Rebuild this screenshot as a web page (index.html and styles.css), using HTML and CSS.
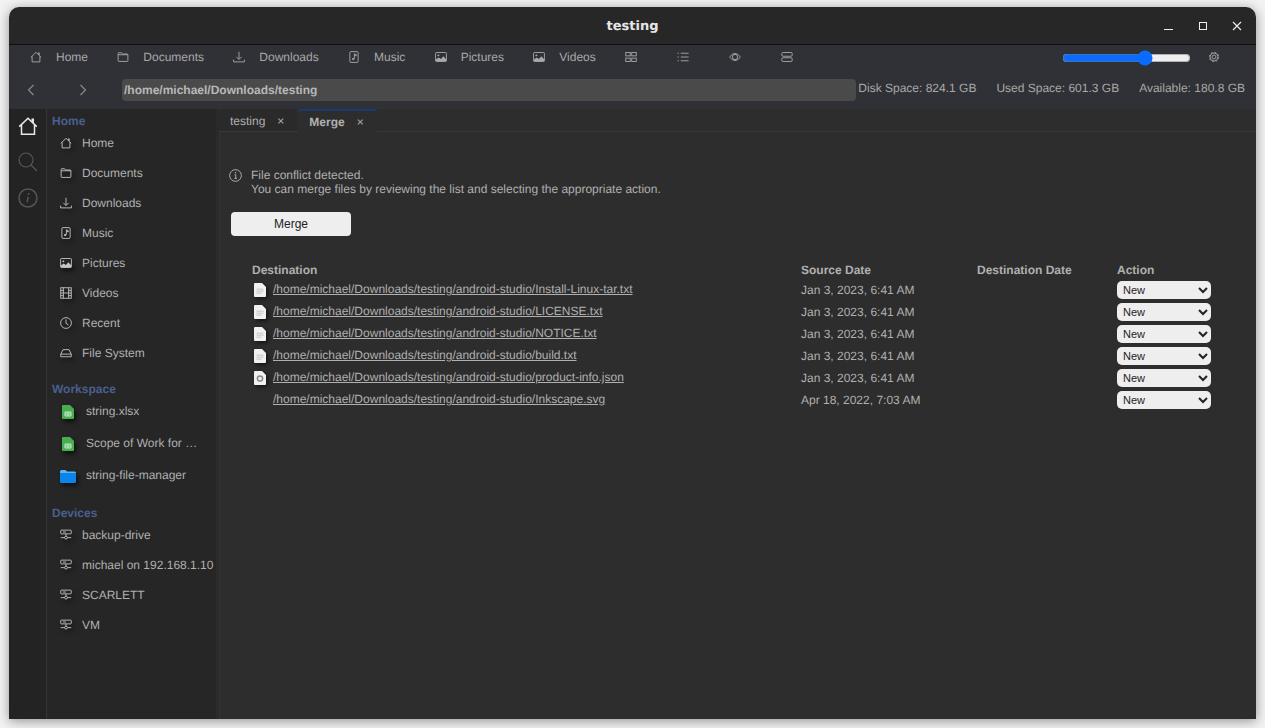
FILE: index.html
```html
<!DOCTYPE html>
<html>
	<head>
		<meta charset="utf-8">
		<title>testing</title>
		<link rel="stylesheet" href="styles.css">
	</head>
	<body>
		<svg class="defs" width="0" height="0">
			<symbol id="i-home" viewBox="0 0 16 16"><path d="M1 8.500 8 1.800l7 6.700M2.800 7v7.500h10.400V7"/><path class="solid" d="M10.800 2h2v4l-2-2z"/></symbol>
			<symbol id="i-folder" viewBox="0 0 16 16"><path d="M1.500 4.500V3.200q0-.9.9-.9h3.200q.6 0 1 .5l.9 1.200h6.100q.9 0 .9.900v8q0 1-1 1H2.500q-1 0-1-1z"/><path d="M1.500 5h13"/></symbol>
			<symbol id="i-down" viewBox="0 0 16 16"><path d="M8 1v10M4.500 7.800 8 11.300l3.500-3.500M.8 11.500v3h14.400v-3"/></symbol>
			<symbol id="i-music" viewBox="0 0 16 16"><rect x="2.500" y=".8" width="11" height="14.400" rx="1.500"/><path d="M8.500 3.500v7M8.500 3.800l2.500 1v1.800l-2.500-1"/><circle cx="6.800" cy="10.800" r="1.500" class="solid"/></symbol>
			<symbol id="i-image" viewBox="0 0 16 16"><rect x=".8" y="2" width="14.400" height="12" rx="1"/><path class="solid" d="M1 13.800v-2.500l4-2.800 3 2 3-3.500 4 4v2.800z"/><circle cx="4.500" cy="5.800" r="1.300" class="solid"/></symbol>
			<symbol id="i-film" viewBox="0 0 16 16"><rect x="1" y="1" width="14" height="14"/><path d="M4.500 1v14M11.500 1v14M4.500 8h7M1 4.500h3.500M1 8h3.500M1 11.500h3.500M11.500 4.500H15M11.500 8H15M11.500 11.500H15"/></symbol>
			<symbol id="i-clock" viewBox="0 0 16 16"><circle cx="8" cy="8" r="7.200"/><path d="M8 3.200V8.500l3.300 2"/></symbol>
			<symbol id="i-drive" viewBox="0 0 16 16"><path d="M1 9.500 4 3.500h8l3 6M1 9.500h14v3.500H1z"/></symbol>
			<symbol id="i-net" viewBox="0 0 16 16"><rect x="1" y="1.500" width="14" height="5" rx=".8"/><path d="M8 6.500v3M1 11.500h5M10 11.500h5M4 4h4"/><circle cx="8" cy="11.500" r="1.900"/></symbol>
			<symbol id="i-grid" viewBox="0 0 16 16"><rect x="1" y="2" width="6" height="4.500"/><rect x="9" y="2" width="6" height="4.500"/><rect x="1" y="9.500" width="6" height="4.500"/><rect x="9" y="9.500" width="6" height="4.500"/></symbol>
			<symbol id="i-list" viewBox="0 0 16 16"><path d="M5 3h10.500M5 8h10.500M5 13h10.500M.8 3h1.700M.8 8h1.700M.8 13h1.700"/></symbol>
			<symbol id="i-eye" viewBox="0 0 16 16"><path d="M.8 8Q4 3.200 8 3.200T15.200 8Q12 12.800 8 12.800T.8 8z"/><circle cx="8" cy="8" r="3.500"/></symbol>
			<symbol id="i-stack" viewBox="0 0 16 16"><rect x="1" y="2" width="14" height="5" rx="1.800"/><rect x="1" y="9" width="14" height="5" rx="1.800"/></symbol>
			<symbol id="i-gear" viewBox="0 0 16 16"><circle cx="8" cy="8" r="2.600"/><circle cx="8" cy="8" r="5.300"/><circle cx="8" cy="8" r="6.300" stroke-width="2" stroke-dasharray="2.200 2.750"/></symbol>
			<symbol id="i-back" viewBox="0 0 12 12"><path d="M8.500 1 3.500 6l5 5"/></symbol>
			<symbol id="i-next" viewBox="0 0 12 12"><path d="M3.500 1l5 5-5 5"/></symbol>
			<symbol id="i-search" viewBox="0 0 20 20"><circle cx="8" cy="8" r="7"/><path d="M13 13l6 6" stroke-width="1.800"/></symbol>
			<symbol id="i-info" viewBox="0 0 16 16"><circle cx="8" cy="8" r="7.200"/><circle cx="8.500" cy="4.800" r=".8" class="solid"/><path d="M8.200 7 7.300 11.500"/></symbol>
			<symbol id="i-notice" viewBox="0 0 16 16"><circle cx="8" cy="8" r="7.200"/><circle cx="8" cy="4.600" r=".9" class="solid"/><path d="M6.800 7h1.500v4.600M6.600 11.600h3.200"/></symbol>
			<symbol id="i-doc" viewBox="0 0 12 14"><path class="page" d="M1 0h7l4 4v9a1 1 0 0 1-1 1H1a1 1 0 0 1-1-1V1a1 1 0 0 1 1-1z"/><path class="lines" d="M2.500 6.200h7M2.500 8.200h7M2.500 10.200h5"/></symbol>
			<symbol id="i-json" viewBox="0 0 12 14"><path class="page" d="M1 0h7l4 4v9a1 1 0 0 1-1 1H1a1 1 0 0 1-1-1V1a1 1 0 0 1 1-1z"/><circle class="ring" cx="6" cy="7.500" r="2.600"/></symbol>
			<symbol id="i-sheet" viewBox="0 0 12 14"><path class="sheet" d="M1 0h7l4 4v9a1 1 0 0 1-1 1H1a1 1 0 0 1-1-1V1a1 1 0 0 1 1-1z"/><path class="sheet-cells" d="M3 7h6v4H3zM3 9h6M6 7v4"/></symbol>
			<symbol id="i-blue" viewBox="0 0 16 13"><path class="blue-back" d="M0 1.500Q0 0 1.500 0h4l1.500 1.500h7.500Q16 1.500 16 3v2H0z"/><path class="blue-front" d="M0 3h16v8.500q0 1.500-1.500 1.500h-13Q0 13 0 11.500z"/></symbol>
		</svg>

		<div class="window">
			<header class="titlebar">
				<h1>testing</h1>
				<div class="controls">
					<i class="ctl-min"></i>
					<i class="ctl-max"></i>
					<svg class="ctl-close" viewBox="0 0 10 10"><path d="M1 1l8 8M9 1l-8 8"/></svg>
				</div>
			</header>

			<div class="toolbar">
				<div class="tool-row">
					<a class="tool"><svg class="ico"><use href="#i-home"/></svg>Home</a>
					<a class="tool"><svg class="ico"><use href="#i-folder"/></svg>Documents</a>
					<a class="tool"><svg class="ico"><use href="#i-down"/></svg>Downloads</a>
					<a class="tool"><svg class="ico"><use href="#i-music"/></svg>Music</a>
					<a class="tool"><svg class="ico"><use href="#i-image"/></svg>Pictures</a>
					<a class="tool"><svg class="ico"><use href="#i-image"/></svg>Videos</a>
					<a class="tool tool-icon"><svg class="ico"><use href="#i-grid"/></svg></a>
					<a class="tool tool-icon"><svg class="ico"><use href="#i-list"/></svg></a>
					<a class="tool tool-icon"><svg class="ico"><use href="#i-eye"/></svg></a>
					<a class="tool tool-icon"><svg class="ico"><use href="#i-stack"/></svg></a>
					<input class="zoom" type="range" min="0" max="100" value="66">
					<svg class="ico"><use href="#i-gear"/></svg>
				</div>
				<div class="path-row">
					<svg class="ico nav"><use href="#i-back"/></svg>
					<svg class="ico nav"><use href="#i-next"/></svg>
					<div class="address">/home/michael/Downloads/testing</div>
					<div class="stats">
						<span>Disk Space: 824.1 GB</span>
						<span>Used Space: 601.3 GB</span>
						<span>Available: 180.8 GB</span>
					</div>
				</div>
			</div>

			<div class="main">
				<nav class="rail">
					<svg class="rail-home"><use href="#i-home"/></svg>
					<svg class="rail-dim"><use href="#i-search"/></svg>
					<svg class="rail-dim"><use href="#i-info"/></svg>
				</nav>

				<aside class="sidebar">
					<h2>Home</h2>
					<ul>
						<li><svg class="ico"><use href="#i-home"/></svg>Home</li>
						<li><svg class="ico"><use href="#i-folder"/></svg>Documents</li>
						<li><svg class="ico"><use href="#i-down"/></svg>Downloads</li>
						<li><svg class="ico"><use href="#i-music"/></svg>Music</li>
						<li><svg class="ico"><use href="#i-image"/></svg>Pictures</li>
						<li><svg class="ico"><use href="#i-film"/></svg>Videos</li>
						<li><svg class="ico"><use href="#i-clock"/></svg>Recent</li>
						<li><svg class="ico"><use href="#i-drive"/></svg>File System</li>
					</ul>
					<h2 class="h-work">Workspace</h2>
					<ul class="work">
						<li><span class="work-ico"><svg class="sheet-ico"><use href="#i-sheet"/></svg></span><span>string.xlsx</span></li>
						<li><span class="work-ico"><svg class="sheet-ico"><use href="#i-sheet"/></svg></span><span>Scope of Work for …</span></li>
						<li><span class="work-ico"><svg class="blue-ico"><use href="#i-blue"/></svg></span><span>string-file-manager</span></li>
					</ul>
					<h2 class="h-dev">Devices</h2>
					<ul>
						<li><svg class="ico"><use href="#i-net"/></svg>backup-drive</li>
						<li><svg class="ico"><use href="#i-net"/></svg>michael on 192.168.1.10</li>
						<li><svg class="ico"><use href="#i-net"/></svg>SCARLETT</li>
						<li><svg class="ico"><use href="#i-net"/></svg>VM</li>
					</ul>
				</aside>

				<section class="pane">
					<div class="tabs">
						<div class="tab">testing<span class="tab-x">×</span></div>
						<div class="tab tab-on">Merge<span class="tab-x">×</span></div>
					</div>
					<div class="page">
						<div class="notice">
							<svg class="ico"><use href="#i-notice"/></svg>
							<p>File conflict detected.<br>You can merge files by reviewing the list and selecting the appropriate action.</p>
						</div>
						<button class="merge-btn">Merge</button>
						<table class="merge">
							<colgroup>
								<col class="c-dest"><col class="c-src"><col class="c-dst"><col class="c-act">
							</colgroup>
							<thead>
								<tr><th>Destination</th><th>Source Date</th><th>Destination Date</th><th>Action</th></tr>
							</thead>
							<tbody>
								<tr>
									<td><div class="file"><svg class="file-ico"><use href="#i-doc"/></svg><a>/home/michael/Downloads/testing/android-studio/Install-Linux-tar.txt</a></div></td>
									<td>Jan 3, 2023, 6:41 AM</td><td></td>
									<td><select><option>New</option></select></td>
								</tr>
								<tr>
									<td><div class="file"><svg class="file-ico"><use href="#i-doc"/></svg><a>/home/michael/Downloads/testing/android-studio/LICENSE.txt</a></div></td>
									<td>Jan 3, 2023, 6:41 AM</td><td></td>
									<td><select><option>New</option></select></td>
								</tr>
								<tr>
									<td><div class="file"><svg class="file-ico"><use href="#i-doc"/></svg><a>/home/michael/Downloads/testing/android-studio/NOTICE.txt</a></div></td>
									<td>Jan 3, 2023, 6:41 AM</td><td></td>
									<td><select><option>New</option></select></td>
								</tr>
								<tr>
									<td><div class="file"><svg class="file-ico"><use href="#i-doc"/></svg><a>/home/michael/Downloads/testing/android-studio/build.txt</a></div></td>
									<td>Jan 3, 2023, 6:41 AM</td><td></td>
									<td><select><option>New</option></select></td>
								</tr>
								<tr>
									<td><div class="file"><svg class="file-ico"><use href="#i-json"/></svg><a>/home/michael/Downloads/testing/android-studio/product-info.json</a></div></td>
									<td>Jan 3, 2023, 6:41 AM</td><td></td>
									<td><select><option>New</option></select></td>
								</tr>
								<tr>
									<td><div class="file"><span class="file-ico"></span><a>/home/michael/Downloads/testing/android-studio/Inkscape.svg</a></div></td>
									<td>Apr 18, 2022, 7:03 AM</td><td></td>
									<td><select><option>New</option></select></td>
								</tr>
							</tbody>
						</table>
					</div>
				</section>
			</div>
		</div>
	</body>
</html>
```

FILE: styles.css
```css
*{box-sizing:border-box;}
html,body,h1,h2,ul,p{margin:0;padding:0;}
ul{list-style:none;}
body{
	height:728px;
	padding:7px 9px 9px;
	overflow:hidden;
	background:#f2f2f2;
	font-family:"Liberation Sans",Arial,sans-serif;
	font-size:12px;
	color:#b0b0b0;
	text-rendering:geometricPrecision;
}
.defs{position:absolute;}
symbol *{fill:none;stroke:currentColor;stroke-width:1.200;}
symbol .solid{fill:currentColor;stroke:none;}
symbol .page{fill:#f0f0f0;stroke:none;}
symbol .lines{stroke:#c4c4c4;stroke-width:1;}
symbol .ring{stroke:#8a8a8a;stroke-width:1.500;}
symbol .sheet{fill:#46b04f;stroke:none;}
symbol .sheet-cells{stroke:#e8f5e9;stroke-width:.8;}
symbol .blue-back{fill:#5cb3f5;stroke:none;}
symbol .blue-front{fill:#0a84e8;stroke:none;}

.window{
	display:flex;
	flex-direction:column;
	height:100%;
	border-radius:10px 10px 0 0;
	overflow:hidden;
	box-shadow:0 2px 12px rgba(0,0,0,.4);
}

/* title bar */
.titlebar{
	flex:none;
	display:flex;
	align-items:center;
	justify-content:center;
	position:relative;
	height:38px;
	padding-top:1px;
	background:#272727;
	border-bottom:1px solid #0f0f0f;
}
.titlebar h1{
	font-family:"DejaVu Sans",sans-serif;
	font-size:13px;
	font-weight:bold;
	color:#e6e6e6;
}
.controls{
	position:absolute;
	right:14px;
	top:0;
	bottom:0;
	display:flex;
	align-items:center;
	gap:25px;
}
.controls i{display:block;}
.ctl-min{width:9px;height:1px;margin:8px 1px 0 0;background:#eee;}
.ctl-max{width:8px;height:8px;border:1px solid #eee;}
.ctl-close{width:10px;height:10px;stroke:#eee;stroke-width:1.100;fill:none;}

/* toolbar */
.toolbar{
	flex:none;
	height:64px;
	padding-top:3px;
	background:#303136;
	color:#a8a8a8;
}
.ico{flex:none;width:12px;height:12px;}
.tool-row{
	display:flex;
	align-items:center;
	height:18px;
	padding:0 36px 0 21px;
	gap:29.300px;
}
.tool{display:flex;align-items:center;gap:14px;}
.tool-icon{margin-right:10.700px;}
.zoom{
	width:129px;
	height:16px;
	margin:1px -12.300px 0 auto;
	accent-color:#0a6cff;
}
.path-row{
	display:flex;
	align-items:flex-start;
	margin-top:13px;
	padding:0 11px 0 16px;
}
.nav{margin:5px 40px 0 0;color:#8a8a8a;}
.nav + .nav{margin-right:33px;}
.address{
	flex:1;
	height:22px;
	padding-left:2px;
	line-height:22px;
	font-weight:bold;
	background:#4a4a4a;
	border-radius:4px;
	color:#b8b8b8;
}
.stats{
	display:flex;
	gap:20px;
	margin-left:2px;
	line-height:18px;
}

/* body of the window */
.main{
	flex:1;
	display:flex;
	min-height:0;
	background:#2d2d2d;
}
.rail{
	flex:none;
	display:flex;
	flex-direction:column;
	align-items:center;
	gap:16px;
	width:38px;
	padding:7px 0 0;
	background:#232323;
	border-right:1px solid #363636;
}
.rail svg{width:20px;height:20px;flex:none;}
.rail-home{color:#e8e8e8;}
.rail-dim{color:#555;}

.sidebar{
	flex:none;
	width:172px;
	padding:5px 0 0 5px;
	background:#262626;
	border-right:3px solid #2a2a2a;
	overflow:hidden;
}
.sidebar h2{
	font-size:12px;
	line-height:14px;
	font-weight:bold;
	color:#4a5f8f;
}
.sidebar .h-work{margin:14px 0 -1px;}
.sidebar .h-dev{margin-top:15px;}
.sidebar li{
	display:flex;
	align-items:center;
	gap:10px;
	height:30px;
	padding-left:8px;
	white-space:nowrap;
}
.sidebar li .ico{color:#c4c4c4;filter:drop-shadow(2px 3px 2px rgba(0,0,0,.6));}
.work li{height:32px;}
.work-ico{
	display:flex;
	align-items:center;
	justify-content:center;
	flex:none;
	width:16px;
	margin-top:2px;
}
.sheet-ico{width:12px;height:14px;filter:drop-shadow(2px 3px 2px rgba(0,0,0,.6));}
.blue-ico{width:16px;height:13px;filter:drop-shadow(2px 3px 2px rgba(0,0,0,.6));}

/* tabs and merge page */
.pane{
	flex:1;
	min-width:0;
	display:flex;
	flex-direction:column;
	background:#2d2d2d;
	border-left:1px solid #333;
}
.tabs{
	flex:none;
	display:flex;
	gap:1px;
	height:23px;
	margin-left:-1px;
	border-bottom:1px solid #383838;
}
.tab{
	display:flex;
	align-items:center;
	gap:12px;
	height:22px;
	padding:2px 13px 0 11px;
	background:#2a2a2a;
	border-radius:4px 4px 0 0;
}
.tab-on{
	height:23px;
	padding:0 13px 0 11px;
	font-weight:bold;
	background:#2d2d2d;
	border-top:2px solid #1d3a6e;
}
.tab-x{width:7px;font-weight:normal;text-align:center;}
.page{padding:36px 0 0 9px;}
.notice{
	display:flex;
	gap:9px;
	line-height:14px;
}
.notice .ico{width:13px;height:13px;margin-top:1px;}
.merge-btn{
	display:block;
	width:120px;
	height:24px;
	margin:16px 0 0 2px;
	font:12px "Liberation Sans",Arial,sans-serif;
	color:#222;
	background:#eee;
	border:none;
	border-radius:4px;
}
.merge{
	table-layout:fixed;
	width:959px;
	margin:26px 0 0 23px;
	border-collapse:collapse;
}
.c-dest{width:549px;}
.c-src{width:176px;}
.c-dst{width:140px;}
.c-act{width:94px;}
.merge th{
	height:17px;
	padding:1px 0 0;
	font-weight:bold;
	text-align:left;
	vertical-align:top;
}
.merge td{height:22px;padding:0;}
.file{
	display:flex;
	align-items:center;
	gap:7px;
	padding:0 0 2px 2px;
}
.file a{text-decoration:underline;}
.file-ico{
	display:block;
	flex:none;
	width:12px;
	height:14px;
	margin-top:2px;
	filter:drop-shadow(2px 2px 2px rgba(0,0,0,.6));
}
.merge select{
	display:block;
	width:94px;
	height:18px;
	padding:0 0 0 2px;
	font:11px "Liberation Sans",Arial,sans-serif;
	color:#222;
	background-color:#eee;
	border:none;
	border-radius:5px;
}
```
